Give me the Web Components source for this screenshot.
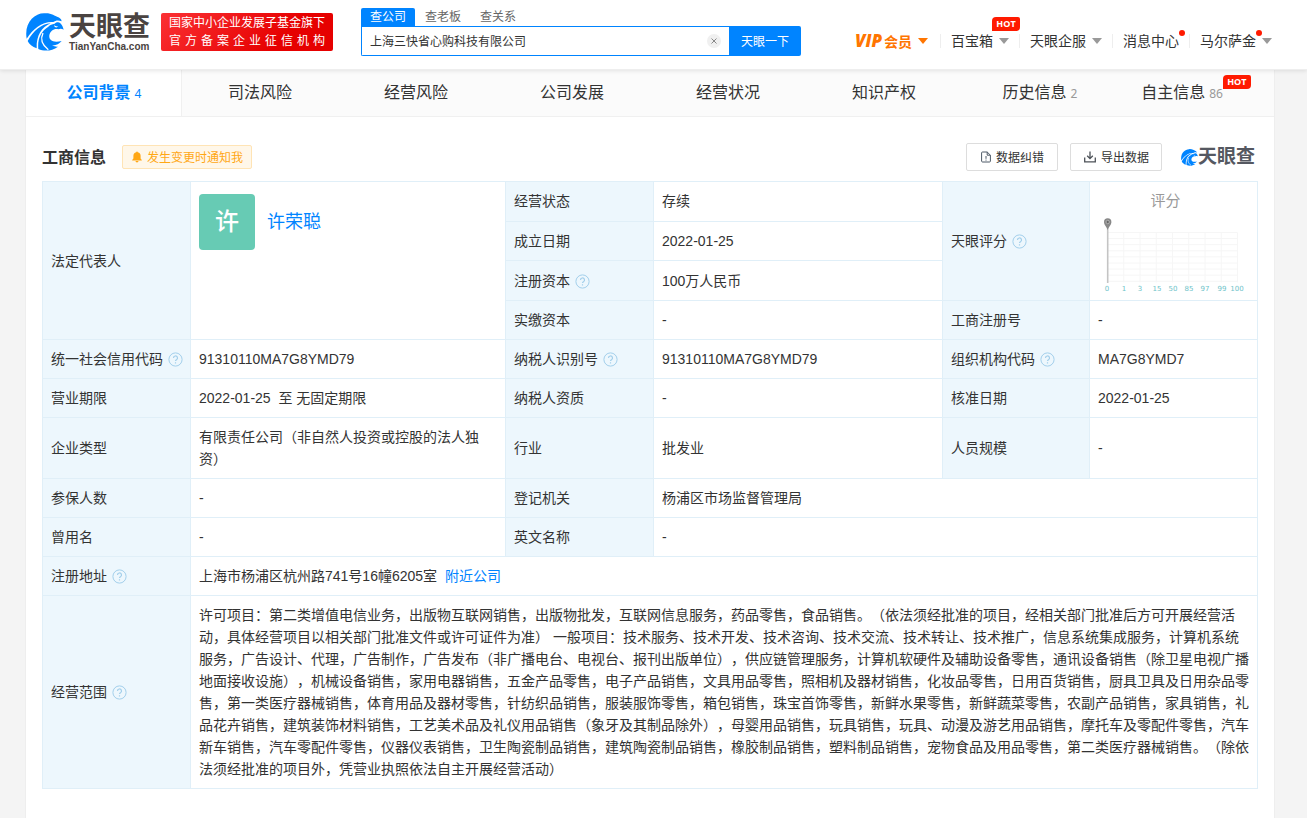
<!DOCTYPE html>
<html lang="zh-CN">
<head>
<meta charset="UTF-8">
<meta name="viewport" content="width=device-width, initial-scale=1.0">
<title>上海三快省心购科技有限公司 - 天眼查</title>
<style>
  * {
    box-sizing: border-box;
  }

  body {
    margin: 0;
    background-color: #f4f4f4;
    color: #333;
    font-family: "Noto Sans", "Noto Sans CJK SC", sans-serif;
    font-size: 14px;
    text-spacing-trim: space-all;
  }
</style>
</head>
<body>
  <site-header></site-header>

  <company-page>
    <section-tabs slot="tabs">
      <section-tab count="4" active>公司背景</section-tab>
      <section-tab>司法风险</section-tab>
      <section-tab>经营风险</section-tab>
      <section-tab>公司发展</section-tab>
      <section-tab>经营状况</section-tab>
      <section-tab>知识产权</section-tab>
      <section-tab count="2">历史信息</section-tab>
      <section-tab count="86" hot>自主信息</section-tab>
    </section-tabs>
    <section-heading>工商信息</section-heading>
    <business-info></business-info>
  </company-page>

<script>
// Swirl mark and wordmark, sized by --mark and --word
class BrandLogo extends HTMLElement {
  connectedCallback() {
    const domain = this.hasAttribute('domain') ? '<small>TianYanCha.com</small>' : '';
    this.attachShadow({ mode: 'open' }).innerHTML = `
      <style>
        :host {
          display: flex;
          align-items: center;
          gap: var(--logo-gap, 5px);
          color: var(--logo-color, #4a4341);
        }

        svg {
          width: var(--mark, 38px);
          height: var(--mark, 38px);
          flex: none;
        }

        div {
          display: flex;
          flex-direction: column;
        }

        b {
          font-family: "Liberation Sans", "Noto Sans CJK SC", sans-serif;
          font-size: var(--word, 27px);
          line-height: calc(var(--word, 27px) + 3px);
          font-weight: 700;
          white-space: nowrap;
        }

        small {
          font: bold 10px/10px "Liberation Sans", sans-serif;
        }
      </style>
      <svg viewBox="12 13 114 114" aria-hidden="true">
        <path fill="#0084ff" d="M14 90C6 44 36 14 66 14C88 12 98 22 107 25C112 27 118 30 119 38C111 34 101 34 94 40C60 38 34 60 14 90Z"/>
        <path fill="#0084ff" d="M17 97C34 66 58 46 86 44C58 56 43 80 44 119C31 114 21 106 17 97Z"/>
        <path fill="#0084ff" d="M49 121C46 92 56 68 79 54C84 48 90 47 98 45C103 41 110 39 115 44C121 49 123 57 125 63C120 60 115 59 109 62C98 58 84 66 82 80C80 94 91 103 119 97C112 106 101 111 90 110C98 114 103 115 108 114C89 128 66 128 49 121ZM96 50C97 57 105 58 109 53C105 54 100 53 96 50Z" fill-rule="evenodd"/>
        <path fill="none" stroke="#fff" stroke-width="4" d="M63 73C54 92 62 110 79 123"/>
      </svg>
      <div><b>天眼查</b>${domain}</div>
    `;
  }
}

class SearchBox extends HTMLElement {
  connectedCallback() {
    this.attachShadow({ mode: 'open' }).innerHTML = `
      <style>
        * {
          box-sizing: border-box;
        }

        :host {
          display: block;
          width: 440px;
          font-size: 12px;
        }

        .types {
          display: flex;
          gap: 1px;
        }

        .types a {
          padding: 0 9px;
          line-height: 18px;
          color: #666;
          text-decoration: none;
        }

        .types a.active {
          background-color: #0084ff;
          color: white;
          border-radius: 2px 2px 0 0;
        }

        form {
          display: flex;
          height: 30px;
        }

        .field {
          flex: 1;
          display: flex;
          align-items: center;
          padding: 0 8px;
          border: 1px solid #0084ff;
          border-right: none;
          border-radius: 0 0 0 2px;
          background-color: white;
        }

        input {
          flex: 1;
          min-width: 0;
          padding: 0;
          border: none;
          outline: none;
          background: none;
          font: inherit;
          color: #333;
        }

        button {
          padding: 0;
          border: none;
          font: inherit;
          cursor: pointer;
        }

        .clear {
          display: flex;
          width: 14px;
          height: 14px;
          border-radius: 50%;
          background-color: #f0f0f0;
        }

        .submit {
          width: 72px;
          background-color: #0084ff;
          color: white;
          border-radius: 0 2px 2px 0;
        }
      </style>
      <div class="types">
        <a href="#company" class="active">查公司</a>
        <a href="#boss">查老板</a>
        <a href="#relation">查关系</a>
      </div>
      <form>
        <div class="field">
          <input type="text" aria-label="搜索公司" value="上海三快省心购科技有限公司">
          <button type="button" class="clear" aria-label="清空">
            <svg width="14" height="14" viewBox="0 0 14 14"><path d="M4.5 4.5l5 5M9.5 4.5l-5 5" stroke="#888" fill="none"/></svg>
          </button>
        </div>
        <button type="button" class="submit">天眼一下</button>
      </form>
    `;

    const input = this.shadowRoot.querySelector('input');
    this.shadowRoot.querySelector('.clear').addEventListener('click', () => {
      input.value = '';
      input.focus();
    });
  }
}

class HotBadge extends HTMLElement {
  connectedCallback() {
    this.attachShadow({ mode: 'open' }).innerHTML = `
      <style>
        :host {
          display: block;
          width: 28px;
          background-color: #ff1a00;
          color: white;
          border-radius: 4px 2px 4px 0;
          font: bold 9px/14px "Open Sans", sans-serif;
          text-align: center;
        }
      </style>
      HOT
    `;
  }
}

// Header menu entry. Attributes: caret, dot, hot, vip
class NavItem extends HTMLElement {
  connectedCallback() {
    const caret = this.hasAttribute('caret') ? '<i class="caret"></i>' : '';
    const dot = this.hasAttribute('dot') ? '<i class="dot"></i>' : '';
    const hot = this.hasAttribute('hot') ? '<hot-badge></hot-badge>' : '';
    const vip = this.hasAttribute('vip') ? '<em>VIP</em>' : '';
    this.attachShadow({ mode: 'open' }).innerHTML = `
      <style>
        :host {
          display: flex;
          align-items: center;
          height: 14px;
          padding: 0 10px;
          border-right: 1px solid #eee;
        }

        :host(:last-child) {
          padding-right: 0;
          border-right: none;
        }

        :host([vip]) {
          --caret: #ff7500;
          padding-right: 12px;
        }

        :host([vip]) a {
          color: #ff7500;
          font-weight: 700;
        }

        a {
          position: relative;
          color: #333;
          line-height: 22px;
          text-decoration: none;
          white-space: nowrap;
        }

        em {
          margin-right: 2px;
          font: italic 800 17px/22px "Open Sans", sans-serif;
        }

        .caret {
          margin-left: 6px;
          border: 5px solid transparent;
          border-top: 6px solid var(--caret, #999);
          border-bottom: none;
        }

        .dot {
          position: absolute;
          top: 0;
          right: -6px;
          width: 6px;
          height: 6px;
          border-radius: 50%;
          background-color: #ff1a00;
        }

        hot-badge {
          position: absolute;
          left: 41px;
          top: -13px;
        }
      </style>
      <a href="#">${vip}<slot></slot>${dot}${hot}</a>${caret}
    `;
  }
}

class SiteHeader extends HTMLElement {
  connectedCallback() {
    this.attachShadow({ mode: 'open' }).innerHTML = `
      <style>
        * {
          box-sizing: border-box;
        }

        :host {
          display: flex;
          align-items: flex-start;
          box-sizing: border-box;
          height: 70px;
          padding: 8px 35px 0 26px;
          border-bottom: 1px solid #eee;
          background-color: white;
          box-shadow: 0 1px 4px rgba(0, 0, 0, 0.1);
          position: sticky;
          top: 0;
          z-index: 10;
        }

        brand-logo {
          height: 38px;
          margin-top: 5px;
        }

        .slogan {
          width: 172px;
          height: 38px;
          margin: 5px 28px 0 11px;
          padding: 1px 8px;
          border-radius: 2px;
          background: linear-gradient(135deg, #fb3135, #e60000 70%);
          color: white;
          font-size: 12px;
          line-height: 18px;
        }

        .slogan div {
          text-align-last: justify;
          white-space: nowrap;
        }

        nav {
          display: flex;
          margin: 26px 0 0 auto;
        }
      </style>
      <brand-logo domain></brand-logo>
      <div class="slogan">
        <div>国家中小企业发展子基金旗下</div>
        <div>官方备案企业征信机构</div>
      </div>
      <search-box></search-box>
      <nav>
        <nav-item vip caret>会员</nav-item>
        <nav-item caret hot>百宝箱</nav-item>
        <nav-item caret>天眼企服</nav-item>
        <nav-item dot>消息中心</nav-item>
        <nav-item dot caret>马尔萨金</nav-item>
      </nav>
    `;
  }
}

class CompanyPage extends HTMLElement {
  connectedCallback() {
    this.attachShadow({ mode: 'open' }).innerHTML = `
      <style>
        :host {
          display: block;
          box-sizing: border-box;
          min-height: calc(100vh - 70px);
          margin: 0 32px 0 25px;
          border: 1px solid #eee;
          border-width: 0 1px;
          background-color: white;
        }

        main {
          padding: 26px 16px 29px;
        }
      </style>
      <slot name="tabs"></slot>
      <main><slot></slot></main>
    `;
  }
}

class SectionTabs extends HTMLElement {
  connectedCallback() {
    this.attachShadow({ mode: 'open' }).innerHTML = `
      <style>
        :host {
          display: grid;
          grid-template-columns: repeat(8, 1fr);
        }
      </style>
      <slot></slot>
    `;
  }
}

class SectionTab extends HTMLElement {
  connectedCallback() {
    const count = this.getAttribute('count');
    const hot = this.hasAttribute('hot') ? '<hot-badge></hot-badge>' : '';
    this.attachShadow({ mode: 'open' }).innerHTML = `
      <style>
        :host {
          display: flex;
          justify-content: center;
          box-sizing: border-box;
          height: 47px;
          border-bottom: 1px solid #f0f0f0;
          background-color: #fbfbfb;
          --tab: #333;
          --count: #999;
        }

        :host([active]) {
          background-color: white;
          box-shadow: inset -1px 0 #f0f0f0;
          font-weight: 700;
          --tab: #0084ff;
          --count: #0084ff;
        }

        a {
          color: var(--tab);
          font-size: 16px;
          line-height: 44px;
          text-decoration: none;
          white-space: nowrap;
        }

        span {
          margin-left: 4px;
          color: var(--count);
          font-size: 12px;
          font-weight: 400;
        }

        hot-badge {
          align-self: flex-start;
          margin-top: 5px;
        }
      </style>
      <a href="#"><slot></slot>${count ? `<span>${count}</span>` : ''}</a>${hot}
    `;
  }
}

class SectionHeading extends HTMLElement {
  connectedCallback() {
    this.attachShadow({ mode: 'open' }).innerHTML = `
      <style>
        * {
          box-sizing: border-box;
        }

        :host {
          display: flex;
          align-items: center;
          height: 28px;
          margin-bottom: 10px;
        }

        h2 {
          margin: 0 16px 0 0;
          font-size: 16px;
          line-height: 24px;
        }

        button {
          display: flex;
          align-items: center;
          justify-content: center;
          font: inherit;
          font-size: 12px;
          border-radius: 2px;
          padding: 0;
          cursor: pointer;
        }

        .notify {
          gap: 4px;
          width: 130px;
          height: 24px;
          margin-right: auto;
          border: 1px solid #ffe4b5;
          background-color: #fff7e9;
          color: #ffa715;
        }

        .tool {
          gap: 4px;
          width: 92px;
          height: 28px;
          margin-right: 12px;
          border: 1px solid #ddd;
          background-color: white;
          color: #333;
        }

        brand-logo {
          --mark: 17px;
          --word: 19px;
          --logo-gap: 0px;
          --logo-color: #555861;
          margin: 0 3px 0 7px;
        }
      </style>
      <h2><slot></slot></h2>
      <button type="button" class="notify">
        <svg width="12" height="12" viewBox="0 0 12 12"><path fill="#ffa715" d="M5.2 1.2a.8.8 0 0 1 1.6 0A3.6 3.6 0 0 1 9.6 4.7v2.8l1.2 1.6v.4H1.2v-.4l1.2-1.6V4.7A3.6 3.6 0 0 1 5.2 1.2zM4.5 10.1h3a1.5 1.3 0 0 1-3 0z"/></svg>
        发生变更时通知我
      </button>
      <button type="button" class="tool">
        <svg width="12" height="12" viewBox="0 0 12 12" fill="none" stroke="#4d5966"><path d="M7.2 1H2.5a.9.9 0 0 0-.9.9v8.2c0 .5.4.9.9.9h7a.9.9 0 0 0 .9-.9V4.2zM7.2 1v3.2h3.2M6 5v2.8M6 8.6v1"/></svg>
        数据纠错
      </button>
      <button type="button" class="tool">
        <svg width="14" height="14" viewBox="0 0 14 14" fill="none" stroke="#4d5258" stroke-width="1.3"><path d="M1.7 7.5v4.3h10.6V7.5M7 1.5v7M4.2 5.8L7 8.6l2.8-2.8"/></svg>
        导出数据
      </button>
      <brand-logo></brand-logo>
    `;
  }
}

class HelpIcon extends HTMLElement {
  connectedCallback() {
    this.attachShadow({ mode: 'open' }).innerHTML = `
      <style>
        :host {
          display: inline-block;
          width: 15px;
          height: 15px;
          margin-left: 5px;
          vertical-align: -3px;
        }

        svg {
          display: block;
        }
      </style>
      <svg width="15" height="15" viewBox="0 0 15 15" fill="none" stroke="#a3cfeb" role="img" aria-label="说明">
        <circle cx="7.5" cy="7.5" r="6.6"/>
        <path stroke-width="1.2" d="M5.5 6a2 2 0 1 1 3 1.7c-.7.4-1 .7-1 1.4M7.5 10.2v1.2"/>
      </svg>
    `;
  }
}

class ScoreChart extends HTMLElement {
  connectedCallback() {
    const labels = [['0', 9], ['1', 26], ['3', 42], ['15', 59], ['50', 75], ['85', 91], ['97', 107], ['99', 124], ['100', 139]];
    const columns = [0, 1, 2, 3, 4, 5, 6, 7, 8].map(i => `M${9.5 + i * 16.25} 20.5v50`).join('');
    const rows = [0, 1, 2, 3, 4, 5, 6, 7, 8].map(i => `M9.5 ${20.5 + i * 6.1}h130`).join('');
    this.attachShadow({ mode: 'open' }).innerHTML = `
      <style>
        :host {
          display: block;
        }

        .title {
          padding-right: 16px;
          color: #999;
          font-size: 15px;
          line-height: 22px;
          text-align: center;
        }

        svg {
          display: block;
        }

        text {
          fill: #6fc3c9;
          font: 7px "DejaVu Sans", sans-serif;
          text-anchor: middle;
        }
      </style>
      <div class="title">评分</div>
      <svg width="151" height="80" viewBox="0 0 151 80">
        <path fill="none" stroke="#f6f6f6" d="${columns}${rows}"/>
        <path stroke="#c4c4c4" stroke-width="1.6" d="M9.7 16v55"/>
        <path fill="#888" d="M9.7 18C8.5 14.5 6 13 6 10a3.7 3.7 0 0 1 7.4 0c0 3-2.5 4.5-3.7 8z"/>
        <circle cx="9.7" cy="10" r="1.7" fill="#666" stroke="#bbb" stroke-width=".8"/>
        ${labels.map(([label, x]) => `<text x="${x}" y="79">${label}</text>`).join('')}
      </svg>
    `;
  }
}

class BusinessInfo extends HTMLElement {
  connectedCallback() {
    this.attachShadow({ mode: 'open' }).innerHTML = `
      <style>
        * {
          box-sizing: border-box;
        }

        :host {
          display: block;
          font-family: "Liberation Sans", "Noto Sans CJK SC", sans-serif;
        }

        table {
          width: 100%;
          table-layout: fixed;
          border-collapse: collapse;
        }

        th, td {
          padding: 8px;
          border: 1px solid #e0eff8;
          font-weight: 400;
          line-height: 22px;
          text-align: left;
        }

        th {
          padding-right: 7px;
          background-color: #edf7fd;
        }

        a {
          color: #0084ff;
          text-decoration: none;
        }

        .person {
          padding: 12px 8px;
          vertical-align: top;
        }

        .person a {
          display: flex;
          align-items: center;
          gap: 12px;
          font-size: 18px;
        }

        .avatar {
          width: 56px;
          border-radius: 4px;
          background-color: #67cbb4;
          color: white;
          font-size: 24px;
          font-weight: 500;
          line-height: 56px;
          text-align: center;
        }

        .nearby {
          margin-left: 4px;
        }
      </style>
      <table>
        <colgroup>
          <col style="width: 148px">
          <col>
          <col style="width: 148px">
          <col style="width: 289px">
          <col style="width: 147px">
          <col style="width: 168px">
        </colgroup>
        <tbody>
          <tr>
            <th rowspan="4">法定代表人</th>
            <td rowspan="4" class="person"><a href="#"><span class="avatar">许</span>许荣聪</a></td>
            <th>经营状态</th>
            <td>存续</td>
            <th rowspan="3">天眼评分<help-icon></help-icon></th>
            <td rowspan="3"><score-chart></score-chart></td>
          </tr>
          <tr>
            <th>成立日期</th>
            <td>2022-01-25</td>
          </tr>
          <tr>
            <th>注册资本<help-icon></help-icon></th>
            <td>100万人民币</td>
          </tr>
          <tr>
            <th>实缴资本</th>
            <td>-</td>
            <th>工商注册号</th>
            <td>-</td>
          </tr>
          <tr>
            <th>统一社会信用代码<help-icon></help-icon></th>
            <td>91310110MA7G8YMD79</td>
            <th>纳税人识别号<help-icon></help-icon></th>
            <td>91310110MA7G8YMD79</td>
            <th>组织机构代码<help-icon></help-icon></th>
            <td>MA7G8YMD7</td>
          </tr>
          <tr>
            <th>营业期限</th>
            <td>2022-01-25&nbsp; 至 无固定期限</td>
            <th>纳税人资质</th>
            <td>-</td>
            <th>核准日期</th>
            <td>2022-01-25</td>
          </tr>
          <tr>
            <th>企业类型</th>
            <td>有限责任公司（非自然人投资或控股的法人独资）</td>
            <th>行业</th>
            <td>批发业</td>
            <th>人员规模</th>
            <td>-</td>
          </tr>
          <tr>
            <th>参保人数</th>
            <td>-</td>
            <th>登记机关</th>
            <td colspan="3">杨浦区市场监督管理局</td>
          </tr>
          <tr>
            <th>曾用名</th>
            <td>-</td>
            <th>英文名称</th>
            <td colspan="3">-</td>
          </tr>
          <tr>
            <th>注册地址<help-icon></help-icon></th>
            <td colspan="5">上海市杨浦区杭州路741号16幢6205室 <a href="#" class="nearby">附近公司</a></td>
          </tr>
          <tr>
            <th>经营范围<help-icon></help-icon></th>
            <td colspan="5">许可项目：第二类增值电信业务，出版物互联网销售，出版物批发，互联网信息服务，药品零售，食品销售。（依法须经批准的项目，经相关部门批准后方可开展经营活动，具体经营项目以相关部门批准文件或许可证件为准） 一般项目：技术服务、技术开发、技术咨询、技术交流、技术转让、技术推广，信息系统集成服务，计算机系统服务，广告设计、代理，广告制作，广告发布（非广播电台、电视台、报刊出版单位），供应链管理服务，计算机软硬件及辅助设备零售，通讯设备销售（除卫星电视广播地面接收设施），机械设备销售，家用电器销售，五金产品零售，电子产品销售，文具用品零售，照相机及器材销售，化妆品零售，日用百货销售，厨具卫具及日用杂品零售，第一类医疗器械销售，体育用品及器材零售，针纺织品销售，服装服饰零售，箱包销售，珠宝首饰零售，新鲜水果零售，新鲜蔬菜零售，农副产品销售，家具销售，礼品花卉销售，建筑装饰材料销售，工艺美术品及礼仪用品销售（象牙及其制品除外），母婴用品销售，玩具销售，玩具、动漫及游艺用品销售，摩托车及零配件零售，汽车新车销售，汽车零配件零售，仪器仪表销售，卫生陶瓷制品销售，建筑陶瓷制品销售，橡胶制品销售，塑料制品销售，宠物食品及用品零售，第二类医疗器械销售。（除依法须经批准的项目外，凭营业执照依法自主开展经营活动）</td>
          </tr>
        </tbody>
      </table>
    `;
  }
}

customElements.define('brand-logo', BrandLogo);
customElements.define('search-box', SearchBox);
customElements.define('hot-badge', HotBadge);
customElements.define('nav-item', NavItem);
customElements.define('site-header', SiteHeader);
customElements.define('company-page', CompanyPage);
customElements.define('section-tabs', SectionTabs);
customElements.define('section-tab', SectionTab);
customElements.define('section-heading', SectionHeading);
customElements.define('help-icon', HelpIcon);
customElements.define('score-chart', ScoreChart);
customElements.define('business-info', BusinessInfo);
</script>
</body>
</html>
